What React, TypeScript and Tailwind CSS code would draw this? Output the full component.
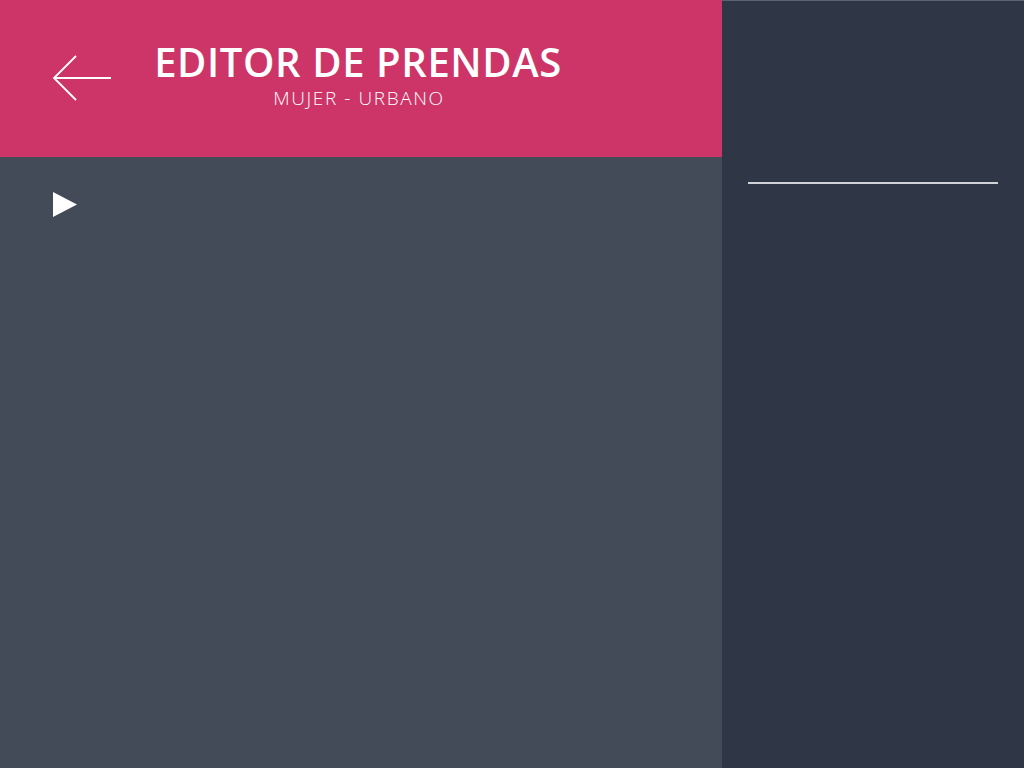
import React from 'react';

const App: React.FC = () => {
  return (
    <div className="flex w-[1024px] h-[768px] overflow-hidden" style={{ fontFamily: '"Open Sans", "Liberation Sans", sans-serif' }}>
      {/* Main editor column */}
      <div className="flex flex-col w-[722px] h-full bg-[#434a58]">
        <header className="relative h-[157px] bg-[#cd3468] flex flex-col items-center pt-[42px]">
          <button className="absolute left-[52px] top-[54px] w-[60px] h-[48px]" aria-label="Volver">
            <svg width="60" height="48" viewBox="0 0 60 48" fill="none" stroke="white" strokeWidth="1.8">
              <path d="M59 24H2" />
              <path d="M24 2L2 24L24 46" />
            </svg>
          </button>
          <h1 className="text-white font-semibold text-[40px] leading-[40px] tracking-[0.6px] ml-[-6px]">
            EDITOR DE PRENDAS
          </h1>
          <p className="text-white font-light text-[19px] leading-[22px] tracking-[1.6px] mt-[5px] ml-[-4px]">
            MUJER - URBANO
          </p>
        </header>
        <div className="flex-1 px-[53px] pt-[35px]">
          <svg width="24" height="25" viewBox="0 0 24 25">
            <path d="M0 0L24 12.5L0 25Z" fill="white" />
          </svg>
        </div>
      </div>

      {/* Side panel */}
      <aside className="flex-1 h-full bg-[#2f3747] border-t border-[#5b6270] px-[26px] pt-[181px]">
        <div className="h-[2px] w-[250px] bg-[#d0d3d8]" />
      </aside>
    </div>
  );
};

export default App;
